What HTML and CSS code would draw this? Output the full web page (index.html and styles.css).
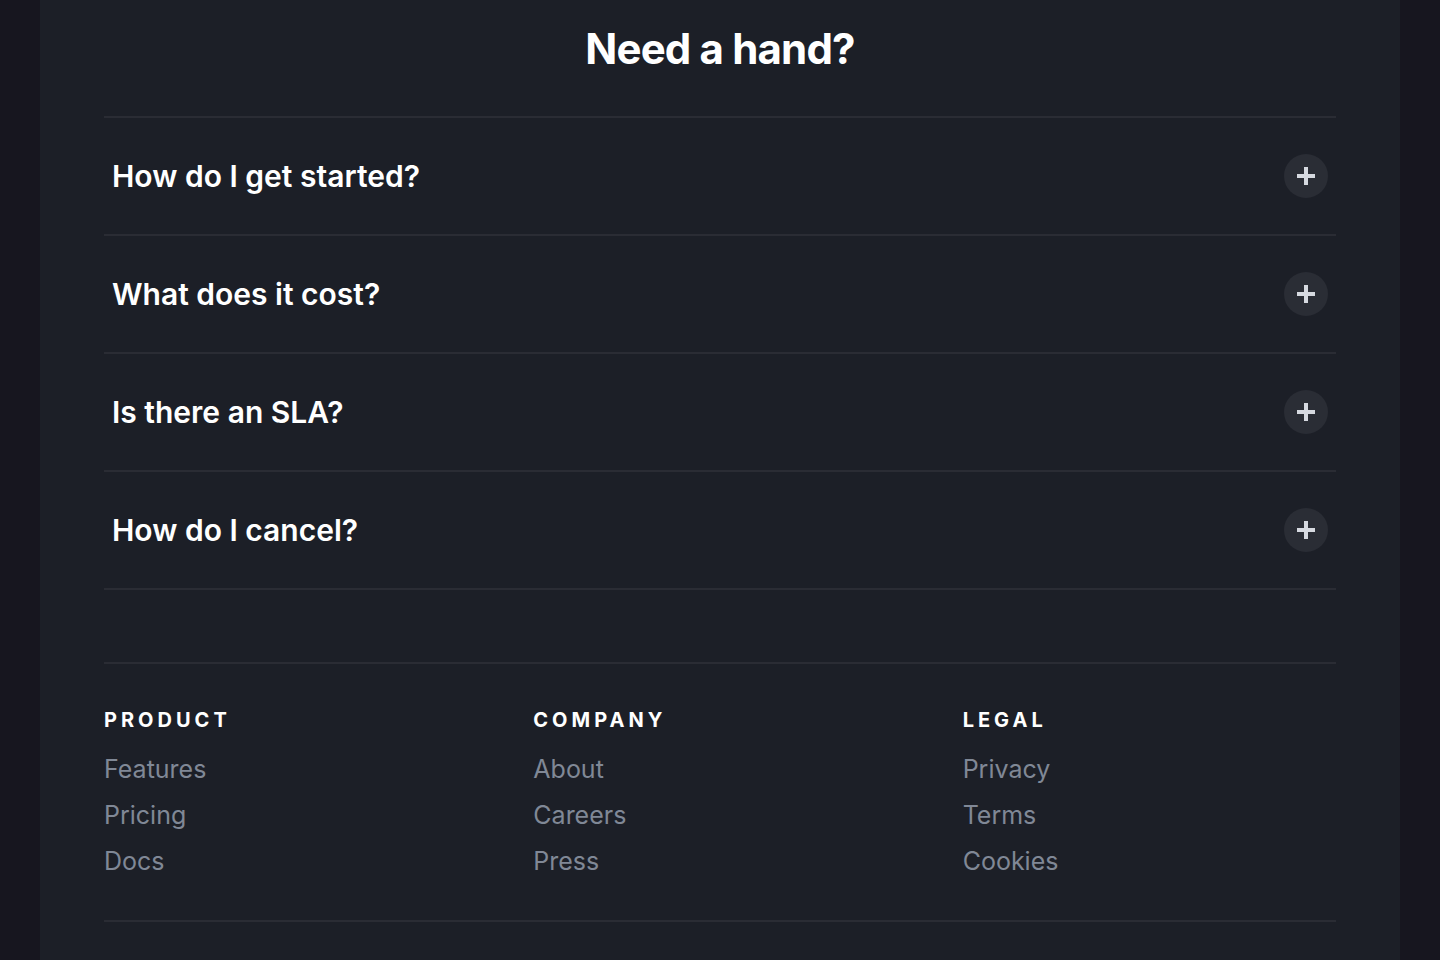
FILE: index.html
```html
<!DOCTYPE html>
<html lang="en">

<head>
  <meta charset="UTF-8">
  <title>Need a hand?</title>
  <link rel="stylesheet" href="styles.css">
</head>
<body>
  <main class="panel">
    <h2 class="title">Need a hand?</h2>

    <div class="faq">
      <div class="faq-item">
        <span class="question">How do I get started?</span>
        <button class="toggle" type="button" aria-label="Expand">
          <svg width="18" height="18" viewBox="0 0 18 18"><path d="M9 0v18M0 9h18" stroke="currentColor" stroke-width="4"/></svg>
        </button>
      </div>
      <div class="faq-item">
        <span class="question">What does it cost?</span>
        <button class="toggle" type="button" aria-label="Expand">
          <svg width="18" height="18" viewBox="0 0 18 18"><path d="M9 0v18M0 9h18" stroke="currentColor" stroke-width="4"/></svg>
        </button>
      </div>
      <div class="faq-item">
        <span class="question">Is there an SLA?</span>
        <button class="toggle" type="button" aria-label="Expand">
          <svg width="18" height="18" viewBox="0 0 18 18"><path d="M9 0v18M0 9h18" stroke="currentColor" stroke-width="4"/></svg>
        </button>
      </div>
      <div class="faq-item">
        <span class="question">How do I cancel?</span>
        <button class="toggle" type="button" aria-label="Expand">
          <svg width="18" height="18" viewBox="0 0 18 18"><path d="M9 0v18M0 9h18" stroke="currentColor" stroke-width="4"/></svg>
        </button>
      </div>
    </div>

    <footer class="footer">
      <div class="footer-col">
        <h3>Product</h3>
        <ul>
          <li><a href="#">Features</a></li>
          <li><a href="#">Pricing</a></li>
          <li><a href="#">Docs</a></li>
        </ul>
      </div>
      <div class="footer-col">
        <h3>Company</h3>
        <ul>
          <li><a href="#">About</a></li>
          <li><a href="#">Careers</a></li>
          <li><a href="#">Press</a></li>
        </ul>
      </div>
      <div class="footer-col">
        <h3>Legal</h3>
        <ul>
          <li><a href="#">Privacy</a></li>
          <li><a href="#">Terms</a></li>
          <li><a href="#">Cookies</a></li>
        </ul>
      </div>
    </footer>
    <div class="bottom-bar"></div>
  </main>
</body>
</html>
```

FILE: styles.css
```css
body {
  margin: 0;
  background-color: #17161f;
  font-family: Inter, "Noto Sans", sans-serif;
  color: #fff;
}

.panel {
  margin: 0 40px;
  min-height: 1100px;
  background-color: #1c1f27;
  padding: 24px 64px 0;
}

.title {
  margin: 0 0 42px;
  text-align: center;
  font-size: 42px;
  line-height: 1.2;
  font-weight: 700;
  letter-spacing: -0.02em;
}

.faq {
  border-top: 2px solid #2a2c34;
}

.faq-item {
  display: flex;
  align-items: center;
  justify-content: space-between;
  padding: 36px 8px;
  border-bottom: 2px solid #2a2c34;
}

.question {
  font-size: 30px;
  line-height: 36px;
  font-weight: 600;
}

.toggle {
  width: 44px;
  height: 44px;
  border: none;
  border-radius: 50%;
  background-color: #2a2d35;
  color: #d6d9e0;
  display: flex;
  align-items: center;
  justify-content: center;
  padding: 0;
  cursor: pointer;
}

.footer {
  margin-top: 72px;
  border-top: 2px solid #2a2c34;
  border-bottom: 2px solid #2a2c34;
  padding: 44px 0 44px;
  display: grid;
  grid-template-columns: repeat(3, 1fr);
  gap: 56px;
}

.footer-col h3 {
  margin: 0 0 22px;
  font-size: 20px;
  line-height: 24px;
  font-weight: 700;
  text-transform: uppercase;
  letter-spacing: 0.2em;
}

.footer-col ul {
  list-style: none;
  margin: 0;
  padding: 0;
  display: flex;
  flex-direction: column;
  gap: 16px;
}

.footer-col a {
  color: #808896;
  text-decoration: none;
  font-size: 25px;
  line-height: 30px;
}

.bottom-bar {
  height: 100px;
}
```
